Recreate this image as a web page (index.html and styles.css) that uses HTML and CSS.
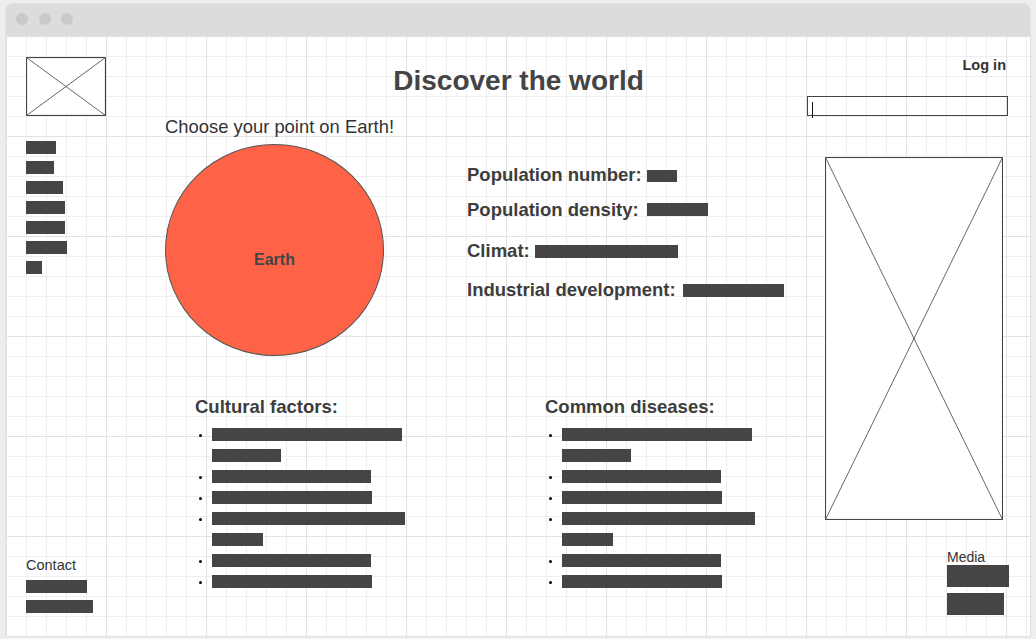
FILE: index.html
```html
<!DOCTYPE html>
<html lang="en">
<head>
<meta charset="utf-8">
<title>Discover the world</title>
<link rel="stylesheet" href="styles.css">
</head>
<body>
<div class="window">
  <div class="titlebar">
    <span class="dot"></span><span class="dot"></span><span class="dot"></span>
  </div>
  <div class="content">
    <header class="header">
      <div class="header-left">
        <svg class="logo" width="80" height="59" viewBox="0 0 80 59">
          <rect x="0.5" y="0.5" width="79" height="58" fill="#fff" stroke="#444" stroke-width="1.2"/>
          <line x1="0.5" y1="0.5" x2="79.5" y2="58.5" stroke="#666" stroke-width="1"/>
          <line x1="79.5" y1="0.5" x2="0.5" y2="58.5" stroke="#666" stroke-width="1"/>
        </svg>
      </div>
      <h1 class="title">Discover the world</h1>
      <div class="header-right">
        <a class="login">Log in</a>
        <div class="search"><span class="caret"></span></div>
      </div>
    </header>
    <div class="body">
      <aside class="leftcol">
        <nav class="nav">
          <span class="bar nav-bar" style="width:30px"></span>
          <span class="bar nav-bar" style="width:28px"></span>
          <span class="bar nav-bar" style="width:37px"></span>
          <span class="bar nav-bar" style="width:39px"></span>
          <span class="bar nav-bar" style="width:39px"></span>
          <span class="bar nav-bar" style="width:41px"></span>
          <span class="bar nav-bar" style="width:16px"></span>
        </nav>
        <div class="contact">
          <div class="contact-title">Contact</div>
          <span class="bar contact-bar" style="width:61px"></span>
          <span class="bar contact-bar second" style="width:67px"></span>
        </div>
      </aside>
      <main class="main">
        <p class="choose">Choose your point on Earth!</p>
        <div class="earth-row">
          <div class="earth">Earth</div>
          <div class="info">
            <div class="info-row r1"><span class="label">Population number:</span><span class="bar info-bar b1" style="width:30px"></span></div>
            <div class="info-row r2"><span class="label">Population density:</span><span class="bar info-bar b2" style="width:61px"></span></div>
            <div class="info-row r3"><span class="label">Climat:</span><span class="bar info-bar b3" style="width:143px"></span></div>
            <div class="info-row r4"><span class="label">Industrial development:</span><span class="bar info-bar b4" style="width:101px"></span></div>
          </div>
        </div>
        <div class="lists">
          <section class="list-block first">
            <h2 class="list-title">Cultural factors:</h2>
            <ul class="list">
              <li><div class="bars"><span class="bar list-bar" style="width:190px"></span><span class="bar list-bar" style="width:69px"></span></div></li>
              <li><div class="bars"><span class="bar list-bar" style="width:159px"></span></div></li>
              <li><div class="bars"><span class="bar list-bar" style="width:160px"></span></div></li>
              <li><div class="bars"><span class="bar list-bar" style="width:193px"></span><span class="bar list-bar" style="width:51px"></span></div></li>
              <li><div class="bars"><span class="bar list-bar" style="width:159px"></span></div></li>
              <li><div class="bars"><span class="bar list-bar" style="width:160px"></span></div></li>
            </ul>
          </section>
          <section class="list-block second">
            <h2 class="list-title">Common diseases:</h2>
            <ul class="list">
              <li><div class="bars"><span class="bar list-bar" style="width:190px"></span><span class="bar list-bar" style="width:69px"></span></div></li>
              <li><div class="bars"><span class="bar list-bar" style="width:159px"></span></div></li>
              <li><div class="bars"><span class="bar list-bar" style="width:160px"></span></div></li>
              <li><div class="bars"><span class="bar list-bar" style="width:193px"></span><span class="bar list-bar" style="width:51px"></span></div></li>
              <li><div class="bars"><span class="bar list-bar" style="width:159px"></span></div></li>
              <li><div class="bars"><span class="bar list-bar" style="width:160px"></span></div></li>
            </ul>
          </section>
        </div>
      </main>
      <aside class="rightcol">
        <svg class="picture" width="178" height="363" viewBox="0 0 178 363">
          <rect x="0.5" y="0.5" width="177" height="362" fill="#fff" stroke="#444" stroke-width="1.1"/>
          <line x1="0.5" y1="0.5" x2="177.5" y2="362.5" stroke="#555" stroke-width="0.9"/>
          <line x1="177.5" y1="0.5" x2="0.5" y2="362.5" stroke="#555" stroke-width="0.9"/>
        </svg>
        <div class="media">
          <div class="media-title">Media</div>
          <span class="bar media-bar" style="width:62px"></span>
          <span class="bar media-bar second" style="width:57px"></span>
        </div>
      </aside>
    </div>
  </div>
</div>
</body>
</html>
```

FILE: styles.css
```css
html, body {
  margin: 0;
  padding: 0;
}

body {
  background: #eeeeee;
  font-family: "Liberation Sans", Arial, sans-serif;
  color: #444;
  width: 1036px;
  height: 639px;
  overflow: hidden;
}

.window {
  margin: 3px 0 0 5px;
  width: 1026px;
  box-sizing: border-box;
  border: 1px solid #e2e2e2;
  border-radius: 7px 7px 0 0;
  overflow: hidden;
}

.titlebar {
  height: 32px;
  background: #dcdcdc;
  display: flex;
  align-items: flex-start;
  gap: 10.5px;
  padding: 9px 0 0 10px;
  box-sizing: border-box;
}

.dot {
  width: 12px;
  height: 12px;
  border-radius: 50%;
  background: #c9c9c9;
}

.content {
  height: 600px;
  box-sizing: border-box;
  padding: 21px 22px 21px 20px;
  display: flex;
  flex-direction: column;
  background-color: #fff;
  background-image:
    linear-gradient(to right, #e2e2e2 1px, transparent 1px),
    linear-gradient(to bottom, #e2e2e2 1px, transparent 1px),
    linear-gradient(to right, #eeeeee 1px, transparent 1px),
    linear-gradient(to bottom, #eeeeee 1px, transparent 1px);
  background-size: 100px 100px, 100px 100px, 20px 20px, 20px 20px;
}

/* header */
.header {
  display: flex;
  align-items: flex-start;
  height: 59px;
  flex: none;
}

.header-left,
.header-right {
  flex: 1 1 0;
}

.logo {
  display: block;
}

.title {
  margin: 7px 0 0;
  padding-left: 3px;
  font-size: 28px;
  line-height: 33px;
  font-weight: bold;
  color: #444;
  white-space: nowrap;
}

.header-right {
  display: flex;
  flex-direction: column;
  align-items: flex-end;
}

.login {
  font-size: 14.5px;
  line-height: 17px;
  font-weight: bold;
  color: #333;
  margin-right: 2px;
}

.search {
  margin-top: 22px;
  width: 201px;
  height: 20px;
  box-sizing: border-box;
  border: 1px solid #444;
  display: flex;
}

.caret {
  width: 1px;
  height: 16px;
  background: #111;
  margin: 5px 0 0 4px;
  flex: none;
}

/* body */
.body {
  flex: 1;
  display: flex;
  min-height: 0;
}

.bar {
  display: block;
  background: #454545;
}

.leftcol {
  width: 139px;
  flex: none;
  display: flex;
  flex-direction: column;
}

.nav {
  margin-top: 25px;
}

.nav-bar {
  height: 13px;
  margin-bottom: 7px;
}

.contact {
  margin-top: auto;
  margin-bottom: 2px;
}

.contact-title {
  font-size: 14.5px;
  line-height: 17px;
  color: #333;
}

.contact-bar {
  height: 13px;
  margin-top: 6px;
}

.contact-bar.second {
  margin-top: 7px;
}

.main {
  flex: 1;
  min-width: 0;
}

.choose {
  margin: 0;
  font-size: 18.4px;
  line-height: 21px;
  color: #333;
}

.earth-row {
  display: flex;
  align-items: flex-start;
  margin-top: 7px;
}

.earth {
  width: 219px;
  height: 212px;
  box-sizing: border-box;
  border: 1px solid #555;
  border-radius: 50%;
  background: #ff6347;
  display: flex;
  align-items: center;
  justify-content: center;
  padding-top: 19px;
  font-size: 16px;
  line-height: 18px;
  font-weight: bold;
  color: #444;
  flex: none;
}

.info {
  margin-left: 83px;
}

.info-row {
  font-size: 18.5px;
  line-height: 22px;
  font-weight: bold;
  color: #3d3d3d;
  white-space: nowrap;
}

.r1 { margin-top: 20px; }
.r2 { margin-top: 13px; }
.r3 { margin-top: 19px; }
.r4 { margin-top: 17px; }

.info-bar {
  display: inline-block;
  vertical-align: baseline;
  height: 13px;
  margin-left: 5px;
}

.info-bar.b1 { height: 12px; margin-bottom: -1px; }
.info-bar.b2 { margin-left: 8px; }
.info-bar.b3 { margin-bottom: -1px; }
.info-bar.b4 { margin-left: 7px; margin-bottom: -1px; }

.lists {
  display: flex;
  margin-top: 40px;
}

.list-block {
  flex: none;
}

.list-block.first {
  width: 350px;
  padding-left: 30px;
}

.list-block.second {
  width: 262px;
}

.list-title {
  margin: 0;
  font-size: 18.5px;
  line-height: 22px;
  font-weight: bold;
  color: #3d3d3d;
}

.list {
  list-style: none;
  margin: 10px 0 0;
  padding: 0 0 0 4px;
}

.list li {
  display: flex;
  align-items: flex-start;
}

.list li::before {
  content: "";
  width: 3px;
  height: 3px;
  border-radius: 50%;
  background: #000;
  margin: 6px 10px 0 0;
  flex: none;
}

.list-bar {
  height: 13px;
  margin-bottom: 8px;
}

.rightcol {
  width: 201px;
  flex: none;
  display: flex;
  flex-direction: column;
}

.picture {
  display: block;
  margin: 41px 0 0 18px;
  flex: none;
}

.media {
  margin: 29px 0 0 140px;
}

.media-title {
  font-size: 14px;
  line-height: 16px;
  color: #333;
}

.media-bar {
  height: 22px;
}

.media-bar.second {
  margin-top: 6px;
}
```
